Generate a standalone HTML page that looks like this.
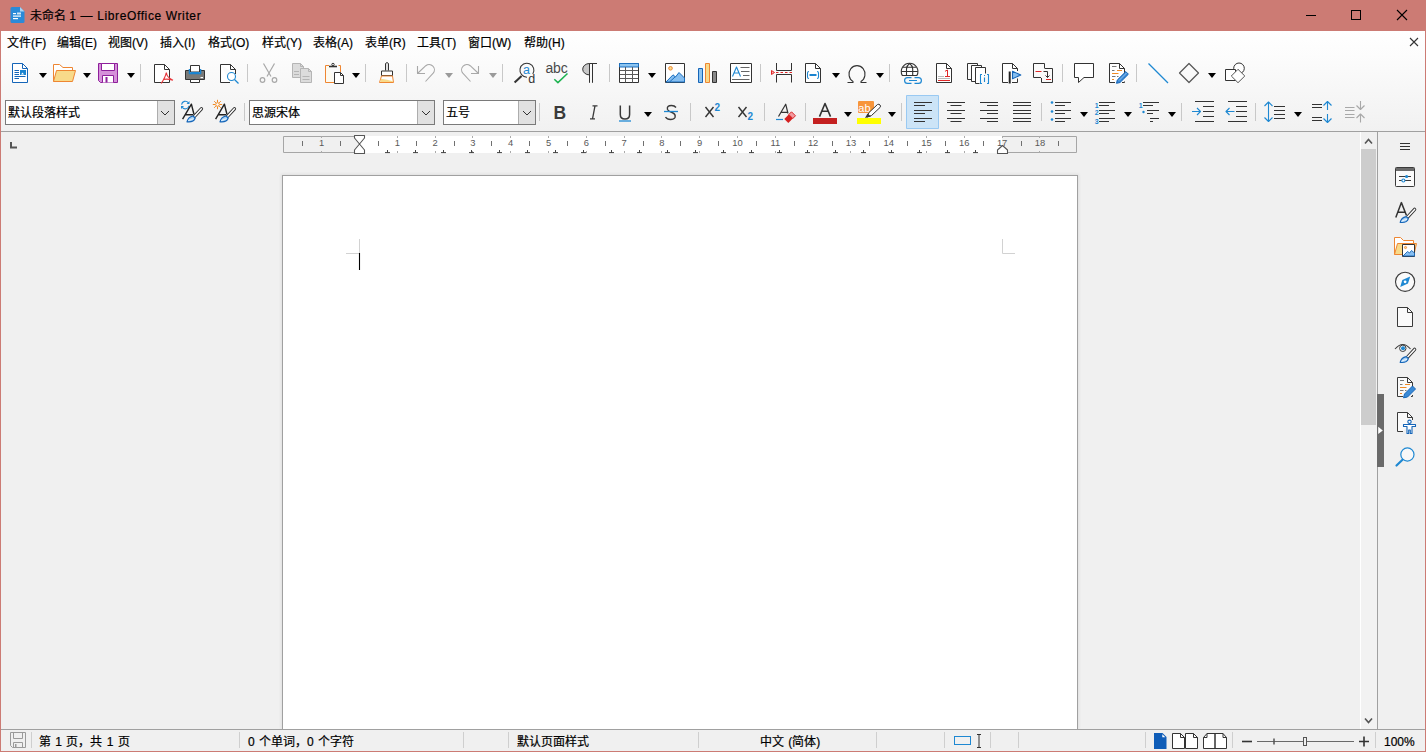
<!DOCTYPE html>
<html lang="zh-CN"><head><meta charset="utf-8">
<style>
*{margin:0;padding:0;box-sizing:border-box}
html,body{width:1426px;height:752px;overflow:hidden;background:#f0f0f0;font-family:"Liberation Sans",sans-serif;font-size:12px;color:#000}
.a{position:absolute}
#title{left:0;top:0;width:1426px;height:31px;background:#cc7b74}
#menu{left:1px;top:31px;width:1424px;height:100px;background:linear-gradient(#ffffff,#fcfcfc 25%,#f1f1f1)}
#tb{display:none}
.t{position:absolute;white-space:nowrap;line-height:1;-webkit-text-stroke:0.2px #000}
.combo{position:absolute;top:100px;height:25px;background:#fff;border:1px solid #7a7a7a}
.combo .btn{position:absolute;right:0;top:0;width:17px;height:23px;background:#e1e1e1;border-left:1px solid #adadad}
.sep{position:absolute;width:1px;background:#cfcfcf}
#hline{left:1px;top:131px;width:1424px;height:1px;background:#a0a0a0}
#page{left:282px;top:175px;width:796px;height:554px;background:#fff;border:1px solid #a0a0a0;border-bottom:none;box-shadow:0 0 3px 1px rgba(0,0,0,.07)}
#status{left:1px;top:729px;width:1424px;height:22px;background:#f0f0f0;border-top:1px solid #a0a0a0}
#bl{left:0;top:0;width:1px;height:752px;background:#cc7b74}
#br{left:1425px;top:0;width:1px;height:752px;background:#cc7b74}
#bb{left:0;top:751px;width:1426px;height:1px;background:#cc7b74}
.m{top:37px;font-size:12px}
.st{top:736px;font-size:12px;word-spacing:1px}
</style></head><body>
<div id="title" class="a"></div>
<div id="menu" class="a"></div>
<div id="tb" class="a"></div>
<div id="hline" class="a"></div>
<div id="page" class="a"></div>
<div id="status" class="a"></div>

<div class="t" id="ttl" style="left:30px;top:10px;font-size:12px;color:#000">未命名 <span style="letter-spacing:0.62px">1 — LibreOffice Writer</span></div>
<svg class="a" style="left:0;top:0" width="1426" height="60">
 <path d="M10.5 8.5 Q10.5 7 12 7 H20 L24.5 11.5 V21.5 Q24.5 23 23 23 H12 Q10.5 23 10.5 21.5 Z" fill="#2a8ad8"/>
 <path d="M20 7 L24.5 11.5 H20 Z" fill="#a9d6f5"/>
 <rect x="13" y="13" width="3" height="1.2" fill="#fff"/><rect x="17" y="12.5" width="4" height="2" fill="#cfe6f8"/>
 <rect x="13" y="15.5" width="8" height="1.2" fill="#fff"/><rect x="13" y="18" width="5" height="1.2" fill="#fff"/>
 <rect x="1306" y="15" width="10" height="1" fill="#000"/>
 <rect x="1351.5" y="10.5" width="9" height="9" fill="none" stroke="#000" stroke-width="1"/>
 <path d="M1397 10 L1407 20 M1407 10 L1397 20" stroke="#000" stroke-width="1.1"/>
 <path d="M1410 38 L1418 46 M1418 38 L1410 46" stroke="#333" stroke-width="1.1"/>
</svg>
<div class="t m" style="left:7px">文件(F)</div>
<div class="t m" style="left:57px">编辑(E)</div>
<div class="t m" style="left:108px">视图(V)</div>
<div class="t m" style="left:160px">插入(I)</div>
<div class="t m" style="left:208px">格式(O)</div>
<div class="t m" style="left:262px">样式(Y)</div>
<div class="t m" style="left:313px">表格(A)</div>
<div class="t m" style="left:365px">表单(R)</div>
<div class="t m" style="left:417px">工具(T)</div>
<div class="t m" style="left:468px">窗口(W)</div>
<div class="t m" style="left:524px">帮助(H)</div>
<svg class="a" style="left:0;top:0" width="1426" height="135" fill="none" stroke-linejoin="round">
<g fill="#000" stroke="none">
 <path d="M39 73h8l-4 5z"/><path d="M83 73h8l-4 5z"/><path d="M127 73h8l-4 5z"/>
 <path d="M352 73h8l-4 5z"/><path d="M648 73h8l-4 5z"/><path d="M832 73h8l-4 5z"/>
 <path d="M876 73h8l-4 5z"/><path d="M1208 73h8l-4 5z"/>
</g>
<g fill="#9a9a9a" stroke="none"><path d="M445 73h8l-4 5z"/><path d="M489 73h8l-4 5z"/></g>
<g stroke="#c8c8c8" stroke-width="1">
 <path d="M140.5 64v18M247.5 64v18M365.5 64v18M406.5 64v18M502.5 64v18M609.5 64v18M760.5 64v18M889.5 64v18M1062.5 64v18M1136.5 64v18"/>
</g>
<!-- new doc -->
<path d="M12.5 63.5H22.5L27.5 68.5V82.5H12.5Z" fill="#fff" stroke="#1565b8"/>
<path d="M22.5 63.5V68.5H27.5" stroke="#1565b8"/>
<g stroke="#1565b8" stroke-width="1.2"><path d="M14.5 70.5h4.5M14.5 72.5h4.5M14.5 74.5h4.5M14.5 76.5h11M14.5 78.5h4.5"/></g>
<rect x="20" y="70" width="6" height="5" fill="#1a84d0"/>
<path d="M21 74.5l1.5-2 1.5 2z" fill="#fff"/>
<!-- folder -->
<path d="M53.5 81.5V64.5H59.5L63 67.5H72.5V70.5" fill="#fff" stroke="#ee8632"/>
<path d="M56.5 70.5H75.5L72.5 81.5H53.5Z" fill="#f8da8a" stroke="#ee8632"/>
<!-- save -->
<path d="M98.5 63.5H117.5V82.5H100.5L98.5 80.5Z" fill="#d591d9" stroke="#8e1f9b"/>
<rect x="101.5" y="63.5" width="13" height="7" fill="#fff" stroke="#8e1f9b"/>
<path d="M102.5 82.5V75.5H113.5V82.5" fill="#fff" stroke="#8e1f9b"/>
<rect x="105.5" y="77" width="2" height="5.5" fill="#8e1f9b"/>
<!-- pdf -->
<path d="M154.5 64.5H164.5L169.5 69.5V82.5H154.5Z" fill="#fff" stroke="#333"/>
<path d="M164.5 64.5V69.5H169.5" stroke="#333"/>
<path d="M166.3 72.5Q165.5 77 161.2 83.5M166.3 72.5Q166.8 77.5 173 80.2M163.5 79.5Q167 78.3 173 80.2" stroke="#e8383d" stroke-width="1.2"/>
<!-- printer -->
<path d="M185.5 70.5H189.5V73.5H200.5V70.5H204.5V79.5H185.5Z" fill="#7a7a78" stroke="#333"/>
<path d="M189.5 69V73.5H200.5V69" stroke="#1a84d0" stroke-width="1.6"/>
<rect x="190.5" y="65.5" width="9" height="6.5" fill="#fff" stroke="#333"/>
<rect x="190.5" y="72" width="9" height="1.5" fill="#1a84d0"/>
<rect x="190.5" y="79.5" width="9" height="3" fill="#fff" stroke="#333"/>
<rect x="200.5" y="77" width="2.5" height="1.2" fill="#fff"/>
<!-- preview -->
<path d="M220.5 64.5H230.5L235.5 69.5V74M230 82.5H220.5V64.5" fill="#fff" stroke="#333"/>
<path d="M230.5 64.5V69.5H235.5" stroke="#333"/>
<circle cx="231.5" cy="76.5" r="4" fill="#fff" stroke="#1e88d2" stroke-width="1.1"/>
<path d="M234.5 79.5L238.5 83.5" stroke="#1e88d2" stroke-width="1.2"/>
<!-- scissors -->
<g stroke="#a8a8a8" stroke-width="1.2">
 <path d="M263.5 63.5L271 76.5M274.5 63.5L267 76.5"/>
 <circle cx="262.5" cy="80" r="2.3"/><circle cx="274.5" cy="80" r="2.3"/>
</g>
<!-- copy -->
<path d="M292.5 63.5H300.5L303.5 66.5V77.5H292.5Z" fill="#dcdcdc" stroke="#b5b5b5"/><path d="M300.5 63.5V66.5H303.5" stroke="#b5b5b5"/>
<path d="M300.5 68.5H308.5L311.5 71.5V82.5H300.5Z" fill="#dcdcdc" stroke="#b5b5b5"/><path d="M308.5 68.5V71.5H311.5" stroke="#b5b5b5"/>
<path d="M294 71.5h5M294 74.5h5M302.5 76.5h7M302.5 79.5h7" stroke="#b5b5b5"/>
<!-- paste -->
<path d="M329 65.5H325.5V82.5H334M338.5 65.5H340.5V72" fill="#fdfaf0" stroke="#ee8632"/>
<path d="M329 66.5h8" stroke="#333" stroke-width="1.6"/>
<circle cx="333" cy="64.5" r="1.2" stroke="#333" fill="#fff"/>
<path d="M334.5 72.5H340.5L343.5 75.5V83.5H334.5Z" fill="#fff" stroke="#333"/><path d="M340.5 72.5V75.5H343.5" stroke="#333"/>
<!-- clone brush -->
<path d="M385.5 70.5V63.5Q387 61.5 388.5 63.5V70.5" fill="#e0e0e0" stroke="#333"/>
<rect x="381.5" y="71" width="11" height="4.5" fill="#fff" stroke="#333"/>
<path d="M381.5 76H392.5L393.5 82.5H379.5Z" fill="#fff" stroke="#ee8632"/>
<path d="M380.3 82L380.9 78.8Q387 79.6 393 81.2L393.1 82Z" fill="#f8da8a"/>
<!-- undo -->
<g stroke="#a8a8a8" stroke-width="1.1">
 <path d="M417.5 66V73.5H425"/>
 <path d="M418 73L425.8 65.7A5.3 5.3 0 0 1 433.2 73.2L425.5 81.5"/>
 <path d="M478.5 66V73.5H471"/>
 <path d="M478 73L470.2 65.7A5.3 5.3 0 0 0 462.8 73.2L470.5 81.5"/>
</g>
<!-- find replace -->
<path d="M532.8 74A7 7 0 1 0 527 77.2" stroke="#333" stroke-width="1.05"/>
<path d="M514.6 82.4L521.6 76" stroke="#333" stroke-width="2.1"/>
<text x="523" y="73.8" font-family="Liberation Sans" font-size="12.5" fill="#1e88d2">a</text>
<text x="528.3" y="82.6" font-family="Liberation Sans" font-size="12.5" fill="#333">d</text>
<!-- abc -->
<text x="545.5" y="72.7" font-family="Liberation Sans" font-size="14" fill="#4a4a4a" letter-spacing="-0.2">abc</text>
<path d="M554.3 79.3L557.9 82.6L567.5 73.5" stroke="#1db350" stroke-width="1.5"/>
<!-- pilcrow -->
<path d="M589.5 63.5H597M589.5 63.5V82.8M592.5 63.5V82.8" stroke="#333"/>
<path d="M589.5 63.5A6.8 5.7 0 0 0 589.5 74.9Z" fill="#c8c8c8" stroke="#333"/>
<!-- table -->
<rect x="619.5" y="63.5" width="19" height="19" fill="#fff" stroke="#333"/>
<rect x="619.5" y="63.5" width="19" height="3.5" fill="#8cc4f0" stroke="#1a6fc0"/>
<path d="M620 70.5h18M620 74.5h18M620 78.5h18M625.5 67v15.5M632.5 67v15.5" stroke="#5a5a5a"/>
<!-- image -->
<rect x="665.5" y="63.5" width="19" height="19" fill="#fff" stroke="#333"/>
<path d="M666 82L673 74.8L675.5 77L679 72.5L684.5 78V82Z" fill="#86bef0" stroke="#1a6fc0"/>
<path d="M669.5 82L675.5 76.5" stroke="#1a6fc0"/>
<circle cx="670.5" cy="68.3" r="1.8" fill="#f8da8a" stroke="#ee8632"/>
<!-- chart -->
<rect x="698.5" y="68.5" width="4" height="14" fill="#8cc4f0" stroke="#1565b8"/>
<rect x="705.5" y="63.5" width="4" height="19" fill="#f8da8a" stroke="#ee8632"/>
<rect x="712.5" y="71.5" width="4" height="11" fill="#888" stroke="#333"/>
<!-- textbox -->
<rect x="730.5" y="63.5" width="21" height="19" fill="#fff" stroke="#333"/>
<path d="M732.5 76.5L736.5 67L740.5 76.5M734 73h5" stroke="#1e88d2" stroke-width="1.1"/>
<path d="M740.5 67.5h9M741 71.5h8.5M743 75.5h6.5M732 79.5h17.5" stroke="#666"/>
<!-- page break -->
<path d="M776.5 63V70.5H791.5V63M776.5 82.5V74.5H791.5V82.5" stroke="#333"/>
<path d="M776 72.5H792" stroke="#e02828" stroke-dasharray="2.5 2"/>
<path d="M771.5 70.5V74.5L774.5 72.5Z" fill="#f6b0b0" stroke="#e02828"/>
<!-- field -->
<path d="M805.5 63.5H815.5L820.5 68.5V82.5H805.5Z" fill="#fff" stroke="#333"/>
<path d="M815.5 63.5V68.5H820.5" stroke="#333"/>
<path d="M809 71.5Q807.5 71.5 807.5 73V77Q807.5 78.5 809 78.5M817 71.5Q818.5 71.5 818.5 73V77Q818.5 78.5 817 78.5" stroke="#1e88d2" stroke-width="1.1"/>
<path d="M809.5 75h7" stroke="#1a84d0" stroke-width="2"/>
<!-- omega -->
<path d="M847.5 82.5H853V81.5A8 8.5 0 1 1 861 81.5V82.5H866.5" stroke="#333" stroke-width="1.1"/>
<!-- hyperlink -->
<path d="M902.3 75.5A8.3 8.3 0 1 1 916.9 75.5Z" fill="#fff" stroke="#333" stroke-width="1.1"/>
<path d="M903 67.2H916.2M901.3 71.5H917.9M906.5 75.5V69Q906.7 65.5 909.6 63.5Q912.5 65.5 912.7 69V75.5" stroke="#333" stroke-width="1.1"/>
<path d="M911.5 77.6H907.5A2.9 2.9 0 0 0 907.5 83.4H911.5M914.5 77.6H918.5A2.9 2.9 0 0 1 918.5 83.4H914.5M909 80.5H917" stroke="#1e88d2" stroke-width="1.2"/>
<!-- footnote -->
<path d="M936.5 63.5H946.5L951.5 68.5V82.5H936.5Z" fill="#fff" stroke="#333"/>
<path d="M946.5 63.5V68.5H951.5" stroke="#333"/>
<path d="M945 71.3L947.5 70V76.5M945 76.5H950" stroke="#e02828" stroke-width="1"/>
<path d="M938 76.5h6M938 78.5h12" stroke="#bbb"/>
<path d="M938 80.5h12" stroke="#e02828"/>
<!-- index -->
<path d="M971.5 79.5H967.5V63.5H977.5V65.5" stroke="#333"/>
<path d="M975.5 81.5H971.5V65.5H981.5V67.5" fill="#fff" stroke="#333"/>
<path d="M979.5 83.5H975.5V67.5H985.5V73.5" fill="#fff" stroke="#333"/>
<path d="M982 74.5H980.5V83.5H982M987 74.5H988.5V83.5H987M984.5 77.5V82" stroke="#1e88d2" stroke-width="1.1"/>
<rect x="984" y="75" width="1" height="1" fill="#1e88d2"/>
<!-- bookmark -->
<path d="M1008 82.5H1002.5V63.5H1012.5L1017.5 68.5V71M1017.5 78.5V82.5H1012" fill="#fff" stroke="#333"/>
<path d="M1012.5 63.5V68.5H1017.5" stroke="#333"/>
<path d="M1009.7 71.5V83.5" stroke="#222" stroke-width="2"/>
<path d="M1012.5 71.3V78.7L1020.8 75Z" fill="#86bef0" stroke="#1565b8" stroke-width="1.1"/>
<!-- cross ref -->
<path d="M1044.5 68V63.5H1033.5V77.5H1041" stroke="#333"/>
<path d="M1044.5 68.5H1052.5V82.5H1041.5V78" stroke="#333"/>
<path d="M1035.5 71.5h6M1046 79.5h5" stroke="#e02828"/>
<path d="M1043.5 71.5H1047.5V77.5M1045.5 75.5L1047.5 77.5L1049.5 75.5" stroke="#333"/>
<!-- comment -->
<path d="M1074.5 63.5H1093.5V77.5H1084L1078.5 82.5V77.5H1074.5Z" fill="#fff" stroke="#333"/>
<!-- track changes -->
<path d="M1115 82.5H1109.5V63.5H1119.5L1124.5 68.5V78M1124.5 81.5V82.5H1122" fill="#fff" stroke="#333"/>
<path d="M1119.5 63.5V68.5H1124.5" stroke="#333"/>
<path d="M1112 66.5h4.5M1112 70.5h2.5M1112 76.5h3.5M1117 76.5h1.5" stroke="#777"/>
<path d="M1117 70.5h5M1112 73.5h6.5M1112 79.5h2" stroke="#f08a24"/>
<path d="M1116.5 83.3L1117.3 80L1125.8 71.6L1128.4 74.2L1120 82.5Z" fill="#3b8ad6" stroke="#1565b8"/><path d="M1119 80.5L1126.5 73" stroke="#a9d0f5" stroke-width="0.8"/>
<!-- line -->
<path d="M1148.5 63.5L1168 83" stroke="#1e88d2" stroke-width="1.2"/>
<!-- diamond -->
<path d="M1189 63.5L1198.5 73L1189 82.5L1179.5 73Z" stroke="#555" stroke-width="1.2"/>
<!-- shapes -->
<circle cx="1239" cy="68.3" r="5.3" fill="#fff" stroke="#333"/>
<rect x="1225.5" y="69.5" width="10" height="11" fill="#fff" stroke="#333"/>
<path d="M1238 69.3L1244.8 76L1238 82.7L1231.3 76Z" fill="#fff" stroke="#555"/>
</svg>

<div class="combo" style="left:5px;width:170px"><div class="btn"></div></div>
<div class="combo" style="left:249px;width:186px"><div class="btn"></div></div>
<div class="combo" style="left:443px;width:93px"><div class="btn"></div></div>
<div class="t" style="left:8px;top:107px">默认段落样式</div>
<div class="t" style="left:252px;top:107px">思源宋体</div>
<div class="t" style="left:446px;top:107px">五号</div>
<svg class="a" style="left:0;top:90px" width="1426" height="42" fill="none" stroke-linejoin="round">
<g transform="translate(0,-90)">
<g fill="#000" stroke="none">
 <path d="M644 112h8l-4 5z"/><path d="M844 112h8l-4 5z"/><path d="M888 112h8l-4 5z"/>
 <path d="M1080 112h8l-4 5z"/><path d="M1124 112h8l-4 5z"/><path d="M1168 112h8l-4 5z"/>
 <path d="M1294 112h8l-4 5z"/>
</g>
<g stroke="#c8c8c8">
 <path d="M244.5 103v18M539.5 103v18M690.5 103v18M764.5 103v18M805.5 103v18M901.5 103v18M1041.5 103v18M1181.5 103v18M1255.5 103v18"/>
</g>
<!-- combos chevrons -->
<g stroke="#333" stroke-width="1">
 <path d="M161 111L165 115L169 111M422 111L426 115L430 111M523 111L527 115L531 111"/>
</g>
<!-- update style -->
<path d="M188.3 102.6A3.8 3.8 0 0 0 181.6 104.6M182.3 107.4A3.8 3.8 0 0 0 189 105.8" stroke="#1e88d2" stroke-width="1.1"/>
<path d="M189.5 101v3h-3zM181 109v-3h3z" fill="#1e88d2"/>
<path d="M182.6 119.2L191.4 104.2L194 114.5M185.5 114.8H193" stroke="#222" stroke-width="1.4"/>
<path d="M194.6 116.2L201.4 108.8" stroke="#333" stroke-width="3.4" stroke-linecap="round"/><path d="M194.6 116.2L201.4 108.8" stroke="#fff" stroke-width="1.5" stroke-linecap="round"/><path d="M187.0 121.8Q188.1 117.0 193.0 116.0L195.2 118.0Q193.6 122.6 187.0 121.8Z" fill="#a9d2f5" stroke="#1565b8" stroke-width="1.2"/><path d="M188.3 120.6Q191.3 119.2 193.8 118.9" stroke="#fff" stroke-width="0.8"/>
<!-- new style -->
<g stroke="#f08a24" stroke-width="1"><path d="M217.5 99.8v2.5M217.5 106.7v2.5M212.8 104.5h2.5M219.7 104.5h2.5M214.2 101.2l1.7 1.7M219.1 106.1l1.7 1.7M220.8 101.2l-1.7 1.7M215.9 106.1l-1.7 1.7"/></g>
<circle cx="217.5" cy="104.5" r="1.8" fill="#fff" stroke="#f08a24"/>
<path d="M215.6 119.2L224.4 104.2L227 114.5M218.5 114.8H226" stroke="#222" stroke-width="1.4"/>
<path d="M227.6 116.2L234.4 108.8" stroke="#333" stroke-width="3.4" stroke-linecap="round"/><path d="M227.6 116.2L234.4 108.8" stroke="#fff" stroke-width="1.5" stroke-linecap="round"/><path d="M220.0 121.8Q221.1 117.0 226.0 116.0L228.2 118.0Q226.6 122.6 220.0 121.8Z" fill="#a9d2f5" stroke="#1565b8" stroke-width="1.2"/><path d="M221.3 120.6Q224.3 119.2 226.8 118.9" stroke="#fff" stroke-width="0.8"/>
<!-- B I U S -->
<text x="553.5" y="119" font-family="Liberation Sans" font-weight="bold" font-size="17.5" fill="#3a3a3a">B</text>
<path d="M592.5 105.8h5M590 118.8h5M595 105.8L592.5 118.8" stroke="#3a3a3a" stroke-width="1.3"/>
<path d="M620.3 105.5V114.5Q620.3 119 625 119Q629.6 119 629.6 114.5V105.5" stroke="#3a3a3a" stroke-width="1.5"/>
<path d="M619 121h12" stroke="#1e88d2" stroke-width="1.3"/>
<path d="M676 107.5Q674.5 105.5 671.5 105.5Q666.5 105.5 667.5 109.5Q668.5 111.5 672 112.5Q676 114 675 117.5Q674 119.5 670.5 119.5Q667 119.5 665.5 117" stroke="#3a3a3a" stroke-width="1.4"/>
<path d="M664 111.5h14" stroke="#1e88d2" stroke-width="1.3"/>
<!-- super/sub -->
<path d="M705.5 107L713.5 117M713.5 107L705.5 117" stroke="#333" stroke-width="1.4"/>
<text x="714.6" y="111" font-family="Liberation Sans" font-weight="bold" font-size="10" fill="#1e88d2">2</text>
<path d="M738.5 107L746.5 117M746.5 107L738.5 117" stroke="#333" stroke-width="1.4"/>
<text x="747.6" y="120" font-family="Liberation Sans" font-weight="bold" font-size="10" fill="#1e88d2">2</text>
<!-- clear formatting -->
<path d="M778.5 116.5L785.7 104.2L788 113.5M781.5 112.3H787.5" stroke="#333" stroke-width="1.2"/>
<path d="M776 119.5h7" stroke="#1e88d2" stroke-width="1.2"/>
<path d="M784.3 119L791.5 111.8L795.5 115.8L788.3 123Z" fill="#d42020"/>
<path d="M788.8 114.5L791.5 111.8L795.5 115.8L792.8 118.5Z" fill="#f39aa0" stroke="#d42020" stroke-width="0.8"/>
<!-- font color -->
<path d="M819.5 116.6L825 103.5L830.5 116.6M821.5 111.3H828.5" stroke="#333" stroke-width="1.6"/>
<rect x="813" y="118" width="24" height="6" fill="#c42020"/>
<!-- highlight -->
<rect x="858" y="101" width="16" height="12" rx="1" fill="#f7953a"/>
<text x="858.3" y="111.8" font-family="Liberation Sans" font-size="11" fill="#fff">ab</text>
<path d="M867 117L869 112.5L877.5 104.5Q879 103.8 880 105L880.5 106Q880.5 107 880 107.5L871.5 115.5Z" fill="#fff" stroke="#333" stroke-width="1"/>
<path d="M865 118L867.5 113.5L871 116.5Z" fill="#333"/>
<rect x="857" y="118" width="24" height="6" fill="#ffff00"/>
<!-- align left btn -->
<rect x="906.5" y="95.5" width="32" height="33" fill="#cce4f7" stroke="#99c9f2"/>
<g stroke="#333" stroke-width="1.1">
 <path d="M914 102.5h18M914 105.5h11M914 110.5h18M914 113.5h11M914 118.5h18M914 121.5h11"/>
 <path d="M947 102.5h18M950.5 105.5h11M947 110.5h18M950.5 113.5h11M947 118.5h18M950.5 121.5h11"/>
 <path d="M980 102.5h18M987 105.5h11M980 110.5h18M987 113.5h11M980 118.5h18M987 121.5h11"/>
 <path d="M1013 102.5h18M1013 105.5h18M1013 110.5h18M1013 113.5h18M1013 118.5h18M1013 121.5h18"/>
</g>
<!-- bullets -->
<g fill="#1e88d2"><circle cx="1052" cy="102.5" r="1.3"/><circle cx="1052" cy="111.5" r="1.3"/><circle cx="1052" cy="119.5" r="1.3"/></g>
<path d="M1055 102.5h16M1055 105.5h10M1055 110.5h16M1055 113.5h10M1055 118.5h16M1055 121.5h10" stroke="#333" stroke-width="1.1"/>
<!-- numbering -->
<path d="M1099 102.5h16M1099 105.5h10M1099 110.5h16M1099 113.5h10M1099 118.5h16M1099 121.5h10" stroke="#333" stroke-width="1.1"/>
<g font-family="Liberation Sans" font-size="7" fill="#1e88d2" font-weight="bold"><text x="1094.8" y="107.5">1</text><text x="1094.8" y="115.3">2</text><text x="1094.8" y="123.5">3</text></g>
<!-- outline -->
<path d="M1143 102.5h16M1143 105.5h10M1147 110.5h12M1147 113.5h6M1150 118.5h9M1150 121.5h3" stroke="#333" stroke-width="1.1"/>
<text x="1138.8" y="107.5" font-family="Liberation Sans" font-size="7" fill="#1e88d2" font-weight="bold">1</text>
<circle cx="1143.5" cy="112" r="1.2" fill="#1e88d2"/>
<!-- indent -->
<path d="M1195 101.5h19M1203 106.5h11M1203 111.5h11M1203 116.5h11M1195 121.5h19" stroke="#333" stroke-width="1.1"/>
<path d="M1192 111.5h8.5M1197 108L1200.5 111.5L1197 115" stroke="#1e88d2" stroke-width="1.1"/>
<path d="M1228 101.5h19M1236 106.5h11M1236 111.5h11M1236 116.5h11M1228 121.5h19" stroke="#333" stroke-width="1.1"/>
<path d="M1234.5 111.5H1226M1229.5 108L1226 111.5L1229.5 115" stroke="#1e88d2" stroke-width="1.1"/>
<!-- line spacing -->
<path d="M1268.5 102v19.5M1264.5 106L1268.5 102L1272.5 106M1264.5 117.5L1268.5 121.5L1272.5 117.5" stroke="#1e88d2" stroke-width="1.1"/>
<path d="M1274 106.5h11M1274 110.5h11M1274 114.5h11M1274 118.5h11" stroke="#333" stroke-width="1.1"/>
<!-- para spacing inc -->
<path d="M1312 104.5h10M1312 107.5h10M1312 117.5h10M1312 120.5h10" stroke="#333" stroke-width="1.1"/>
<path d="M1327.5 101.5v8.5M1323.5 105.5L1327.5 101.5L1331.5 105.5M1327.5 114v8.5M1323.5 118.5L1327.5 122.5L1331.5 118.5" stroke="#1e88d2" stroke-width="1.1"/>
<!-- para spacing dec (gray) -->
<path d="M1345 107.5h9.5M1345 110.5h9.5M1345 114.5h9.5M1345 117.5h9.5" stroke="#a8a8a8" stroke-width="1.1"/>
<path d="M1360.5 101v8.5M1356.5 105.5L1360.5 109.5L1364.5 105.5M1360.5 114v8.5M1356.5 118L1360.5 114L1364.5 118" stroke="#a8a8a8" stroke-width="1.1"/>
</g>
</svg>


<!--DOC--><svg class="a" style="left:0;top:130px" width="1426" height="600" fill="none"><g transform="translate(0,-130)">
<path d="M10 142h2v4.5h5v2h-7z" fill="#555"/>
<rect x="359" y="136" width="643" height="17" fill="#fff"/>
<path d="M359 136.5H283.5V152.5H359M1002 136.5H1076.5V152.5H1002" stroke="#a6a6a6"/>
<path d="M302.5 141v5M340.5 141v5M378.5 141v5M416.5 141v5M454.5 141v5M491.5 141v5M529.5 141v5M567.5 141v5M605.5 141v5M643.5 141v5M680.5 141v5M718.5 141v5M756.5 141v5M794.5 141v5M832.5 141v5M869.5 141v5M907.5 141v5M945.5 141v5M983.5 141v5M1021.5 141v5M1058.5 141v5" stroke="#707070"/>
<path d="M321.5 136v2M321.5 151v2M397.5 136v2M397.5 151v2M435.5 136v2M435.5 151v2M472.5 136v2M472.5 151v2M510.5 136v2M510.5 151v2M548.5 136v2M548.5 151v2M586.5 136v2M586.5 151v2M624.5 136v2M624.5 151v2M661.5 136v2M661.5 151v2M699.5 136v2M699.5 151v2M737.5 136v2M737.5 151v2M775.5 136v2M775.5 151v2M813.5 136v2M813.5 151v2M850.5 136v2M850.5 151v2M888.5 136v2M888.5 151v2M926.5 136v2M926.5 151v2M964.5 136v2M964.5 151v2M1002.5 136v2M1002.5 151v2M1039.5 136v2M1039.5 151v2" stroke="#aaa"/>
<g font-family="Liberation Sans" font-size="9.4" fill="#585858"><text x="321.7" y="146.4" text-anchor="middle">1</text><text x="397.3" y="146.4" text-anchor="middle">1</text><text x="435.1" y="146.4" text-anchor="middle">2</text><text x="472.9" y="146.4" text-anchor="middle">3</text><text x="510.7" y="146.4" text-anchor="middle">4</text><text x="548.5" y="146.4" text-anchor="middle">5</text><text x="586.3" y="146.4" text-anchor="middle">6</text><text x="624.1" y="146.4" text-anchor="middle">7</text><text x="661.9" y="146.4" text-anchor="middle">8</text><text x="699.7" y="146.4" text-anchor="middle">9</text><text x="737.5" y="146.4" text-anchor="middle">10</text><text x="775.3" y="146.4" text-anchor="middle">11</text><text x="813.1" y="146.4" text-anchor="middle">12</text><text x="850.9" y="146.4" text-anchor="middle">13</text><text x="888.7" y="146.4" text-anchor="middle">14</text><text x="926.5" y="146.4" text-anchor="middle">15</text><text x="964.3" y="146.4" text-anchor="middle">16</text><text x="1002.1" y="146.4" text-anchor="middle">17</text><text x="1039.9" y="146.4" text-anchor="middle">18</text></g>
<path d="M387.5 150v3M385.0 152.6h5M415.5 150v3M413.0 152.6h5M443.5 150v3M441.0 152.6h5M471.5 150v3M469.0 152.6h5M499.5 150v3M497.0 152.6h5M527.5 150v3M525.0 152.6h5M555.5 150v3M553.0 152.6h5M583.5 150v3M581.0 152.6h5M611.5 150v3M609.0 152.6h5M639.5 150v3M637.0 152.6h5M667.5 150v3M665.0 152.6h5M695.5 150v3M693.0 152.6h5M723.5 150v3M721.0 152.6h5M751.5 150v3M749.0 152.6h5M779.5 150v3M777.0 152.6h5M807.5 150v3M805.0 152.6h5M835.5 150v3M833.0 152.6h5M863.5 150v3M861.0 152.6h5M891.5 150v3M889.0 152.6h5M919.5 150v3M917.0 152.6h5M947.5 150v3M945.0 152.6h5M975.5 150v3M973.0 152.6h5" stroke="#444"/>
<path d="M354.5 135.5H364.5V138L359.5 144L354.5 138Z M354.5 153.5H364.5V150L359.5 144L354.5 150Z" fill="#fff" stroke="#555" stroke-width="1.1" stroke-linejoin="round"/>
<path d="M997.5 153.5H1007.5V150L1002.5 145.5L997.5 150Z" fill="#fff" stroke="#555" stroke-width="1.1" stroke-linejoin="round"/>
<path d="M359.5 239V253.5H346M1002.5 239V253.5H1015" stroke="#d2d2d2"/>
<path d="M359.5 253v17" stroke="#000" stroke-width="1.1"/>
<rect x="1360" y="132" width="1" height="597" fill="#fff"/>
<rect x="1361" y="425" width="16" height="304" fill="#f2f2f2"/>
<rect x="1361" y="149" width="15" height="276" fill="#cdcdcd"/>
<path d="M1365 143.5L1368.5 139.5L1372 143.5M1365 718.5L1368.5 722.5L1372 718.5" stroke="#555" stroke-width="1.6"/>
<rect x="1377" y="132" width="1" height="597" fill="#a0a0a0"/>
<rect x="1377" y="394" width="7" height="73" fill="#6a6a6a"/>
<path d="M1378.2 426.8v7.2l4.6-3.6z" fill="#fff"/>
<path d="M1400 143.5h10M1400 146.5h10M1400 149.5h10" stroke="#333"/>
</g></svg>
<svg class="a" style="left:1380px;top:160px" width="45" height="320" fill="none" stroke-linejoin="round"><g transform="translate(-1380,-160)">
<rect x="1395.5" y="167.5" width="19" height="19" rx="0.8" fill="#fafafa" stroke="#3a3a3a"/>
<rect x="1396" y="168" width="18" height="3" fill="#6a6a6a"/>
<path d="M1399 176.5h12M1399 180.5h12" stroke="#3a3a3a"/>
<circle cx="1406.6" cy="176.5" r="1.6" fill="#1e88d2"/>
<circle cx="1403.4" cy="180.5" r="1.5" fill="#fff" stroke="#1e88d2" stroke-width="1.1"/>
<path d="M1395.8 217.6L1401.4 202.6L1406.5 215.5M1397.8 212.3H1404.8" stroke="#333" stroke-width="1.5"/>
<path d="M1407.8 216.8L1414.6 209.4" stroke="#333" stroke-width="3.4" stroke-linecap="round"/><path d="M1407.8 216.8L1414.6 209.4" stroke="#fff" stroke-width="1.5" stroke-linecap="round"/><path d="M1400.2 222.4Q1401.3 217.6 1406.2 216.6L1408.4 218.6Q1406.8 223.2 1400.2 222.4Z" fill="#a9d2f5" stroke="#1565b8" stroke-width="1.2"/><path d="M1401.5 221.2Q1404.5 219.8 1407.0 219.5" stroke="#fff" stroke-width="0.8"/>
<path d="M1394.5 254.5V237.5H1400.5L1403.5 240.5H1413.5V243.5" fill="#fff" stroke="#ee8632"/>
<path d="M1397.5 243.5H1416.5L1414 254.5H1394.5Z" fill="#f8da8a" stroke="#ee8632"/>
<rect x="1402.5" y="244.5" width="12" height="12" fill="#fff" stroke="#333"/>
<path d="M1403 256L1407.5 251.5L1409.5 253L1411.5 250.5L1414.5 253V256Z" fill="#86bef0" stroke="#1565b8" stroke-width="0.9"/>
<circle cx="1405.5" cy="247.5" r="1.1" fill="#f8da8a" stroke="#ee8632" stroke-width="0.8"/>
<circle cx="1405.1" cy="281.8" r="9.6" fill="#fafafa" stroke="#3a3a3a" stroke-width="1.1"/>
<path d="M1410.2 276.6L1408 283.5L1400.2 287L1402.3 280Z" fill="#1e88d2"/>
<circle cx="1405.1" cy="281.8" r="1.4" fill="#fff"/>
<path d="M1397.5 307.5H1407.5L1412.5 312.5V326.5H1397.5Z" fill="#fafafa" stroke="#3a3a3a"/>
<path d="M1407.5 307.5V312.5H1412.5" stroke="#3a3a3a"/>
<path d="M1395 349Q1402.8 340 1410.5 349" stroke="#3a3a3a" stroke-width="1.1"/>
<circle cx="1402.8" cy="348.3" r="3.2" fill="#fff" stroke="#3a3a3a"/>
<circle cx="1403" cy="348.3" r="2" fill="#1e88d2"/>
<path d="M1407.8 356.8L1414.6 349.4" stroke="#333" stroke-width="3.4" stroke-linecap="round"/><path d="M1407.8 356.8L1414.6 349.4" stroke="#fff" stroke-width="1.5" stroke-linecap="round"/><path d="M1400.2 362.4Q1401.3 357.6 1406.2 356.6L1408.4 358.6Q1406.8 363.2 1400.2 362.4Z" fill="#a9d2f5" stroke="#1565b8" stroke-width="1.2"/><path d="M1401.5 361.2Q1404.5 359.8 1407.0 359.5" stroke="#fff" stroke-width="0.8"/>
<path d="M1403 396.5H1397.5V377.5H1407.5L1412.5 382.5V390M1412.5 395V396.5H1411" fill="#fafafa" stroke="#3a3a3a"/>
<path d="M1407.5 377.5V382.5H1412.5" stroke="#3a3a3a"/>
<path d="M1400 380.5h4M1400 384.5h2.5M1400 390.5h3.5M1405 390.5h1.5" stroke="#777"/>
<path d="M1405 384.5h5M1400 387.5h6.5M1400 393.5h2" stroke="#f08a24"/>
<path d="M1403.5 397.8L1404.5 394L1412.5 386L1415.5 389L1407.5 397Z" fill="#3b8ad6" stroke="#1565b8"/>
<path d="M1403 431.5H1397.5V412.5H1407.5L1412.5 417.5V420" fill="#fafafa" stroke="#3a3a3a"/>
<path d="M1407.5 412.5V417.5H1412.5" stroke="#3a3a3a"/>
<circle cx="1409.5" cy="421.8" r="1.7" fill="#fff" stroke="#1565b8" stroke-width="1.1"/>
<path d="M1403.5 424.5H1415.5V426.5H1412V433.5H1410.3V430H1408.7V433.5H1407V426.5H1403.5Z" fill="#fff" stroke="#1565b8" stroke-width="1.1"/>
<circle cx="1407.4" cy="454.5" r="6.6" fill="#f8f8f8" stroke="#1e88d2" stroke-width="1.2"/>
<path d="M1396.5 465.5L1402.5 459.8" stroke="#1e88d2" stroke-width="2.2" stroke-linecap="round"/>
</g></svg>
<svg class="a" style="left:0;top:730px" width="1426" height="21" fill="none"><g transform="translate(0,-730)">
<path d="M31.5 732v16M239.5 732v16M463.5 732v16M508.5 732v16M698.5 732v16M876.5 732v16M944.5 732v16M990.5 732v16M1018.5 732v16M1145.5 732v16M1232.5 732v16M1375.5 732v16" stroke="#cfcfcf"/>
<path d="M10.5 732.5H25.5V747.5H12.5L10.5 745.5Z" stroke="#9a9a9a"/>
<path d="M13.5 732.5V738.5H22.5V732.5M13.5 747.5V742.5H22.5V747.5" stroke="#9a9a9a"/>
<rect x="15" y="744" width="1.5" height="3.5" fill="#9a9a9a"/>
<rect x="954.5" y="736.5" width="16" height="8" stroke="#1e88d2"/>
<path d="M977 734.5h4M977 747.5h4M979 734.5v13" stroke="#333"/>
<path d="M1154 733H1162.5L1166.5 737V749H1154Z" fill="#0f5db8"/><path d="M1162.3 734.2L1165.3 737.2H1162.3Z" fill="#fff"/>
<path d="M1172.5 733.5H1180.5L1184.5 737.5V748.5H1172.5ZM1185.5 733.5H1193.5L1197.5 737.5V748.5H1185.5Z" fill="#fff" stroke="#333"/>
<path d="M1180.5 733.5V737.5H1184.5M1193.5 733.5V737.5H1197.5" stroke="#333"/>
<path d="M1215 733.5H1207L1203.5 737.5V748.5H1215ZM1215 733.5H1223L1226.5 737.5V748.5H1215Z" fill="#fff" stroke="#333"/>
<path d="M1207 733.5V737.5H1203.5M1223 733.5V737.5H1226.5" stroke="#333"/>
<path d="M1242 741.5h10" stroke="#333" stroke-width="1.6"/>
<path d="M1257 741.5h97" stroke="#6a6a6a" stroke-width="1.2"/>
<path d="M1274 738.5v6" stroke="#555" stroke-width="1.5"/>
<rect x="1303.5" y="737.5" width="3" height="8" fill="#f0f0f0" stroke="#555"/>
<path d="M1359 741.5h10M1364 736.5v10" stroke="#333" stroke-width="1.6"/>
</g></svg>
<div class="t st" style="left:39px">第 1 页，共 1 页</div>
<div class="t st" style="left:248px">0 个单词，0 个字符</div>
<div class="t st" style="left:517px">默认页面样式</div>
<div class="t st" style="left:760px">中文 (简体)</div>
<div class="t st" style="left:1384px">100%</div>
<!--/DOC-->
<div id="bl" class="a"></div><div id="br" class="a"></div><div id="bb" class="a"></div>
</body></html>
